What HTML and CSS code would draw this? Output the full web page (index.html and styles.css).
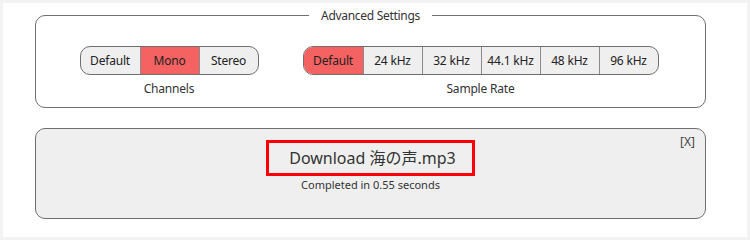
FILE: index.html
```html
<!DOCTYPE html>
<html>
<head>
<meta charset="utf-8">
<link rel="stylesheet" href="styles.css">
</head>
<body>
<div class="page">
  <fieldset class="settings">
    <legend class="settings-title">Advanced Settings</legend>
    <div class="groups">
      <div class="group">
        <div class="seg">
          <span class="seg-btn">Default</span>
          <span class="seg-btn active">Mono</span>
          <span class="seg-btn">Stereo</span>
        </div>
        <div class="group-label">Channels</div>
      </div>
      <div class="group">
        <div class="seg">
          <span class="seg-btn active">Default</span>
          <span class="seg-btn">24 kHz</span>
          <span class="seg-btn">32 kHz</span>
          <span class="seg-btn">44.1 kHz</span>
          <span class="seg-btn">48 kHz</span>
          <span class="seg-btn">96 kHz</span>
        </div>
        <div class="group-label">Sample Rate</div>
      </div>
    </div>
  </fieldset>
  <div class="result">
    <span class="close">[X]</span>
    <a class="download">Download 海の声.mp3</a>
    <div class="status">Completed in 0.55 seconds</div>
  </div>
</div>
</body>
</html>
```
FILE: styles.css
```css
html, body {
  margin: 0;
  padding: 0;
}
body {
  background: #f3f3f3;
  font-family: "Noto Sans", "Noto Sans CJK JP", sans-serif;
  color: #333;
}
.page {
  margin: 3px;
  width: 744px;
  height: 234px;
  background: #fff;
  box-sizing: border-box;
  padding: 4px 41px 0 32px;
}
.settings {
  margin: 0;
  border: 1px solid #6f6f6f;
  border-radius: 10px;
  padding: 22px 0 10px;
}
.settings-title {
  margin: 0 auto;
  padding: 0 12px;
  font-size: 12px;
  letter-spacing: -0.3px;
  line-height: 17px;
  color: #333;
}
.groups {
  display: flex;
  justify-content: center;
  gap: 44px;
  padding-right: 3px;
}
.group {
  display: flex;
  flex-direction: column;
  align-items: center;
}
.seg {
  display: flex;
  border: 1px solid #6f6f6f;
  border-radius: 10px;
  overflow: hidden;
  background: #efefef;
}
.seg-btn {
  width: 58px;
  height: 27px;
  display: flex;
  align-items: center;
  justify-content: center;
  font-size: 12px;
  letter-spacing: -0.2px;
  color: #222;
  border-left: 1px solid #8a8a8a;
}
.seg-btn:first-child {
  border-left: none;
  width: 59px;
}
.seg-btn.active {
  background: #f46262;
}
.group-label {
  margin-top: 5px;
  font-size: 12px;
  letter-spacing: -0.2px;
  line-height: 17px;
  color: #333;
}
.result {
  position: relative;
  margin-top: 20px;
  height: 91px;
  box-sizing: border-box;
  border: 1px solid #6f6f6f;
  border-radius: 10px;
  background: #efefef;
  display: flex;
  flex-direction: column;
  align-items: center;
  padding-top: 11px;
}
.download {
  display: block;
  border: 3px solid #f00;
  padding: 0 16px 0 20px;
  height: 30px;
  line-height: 30px;
  font-size: 16px;
  color: #333;
}
.status {
  margin-top: 1px;
  font-size: 11px;
  line-height: 15px;
  color: #333;
}
.close {
  position: absolute;
  top: 4px;
  right: 10px;
  font-size: 12px;
  color: #444;
}
```
